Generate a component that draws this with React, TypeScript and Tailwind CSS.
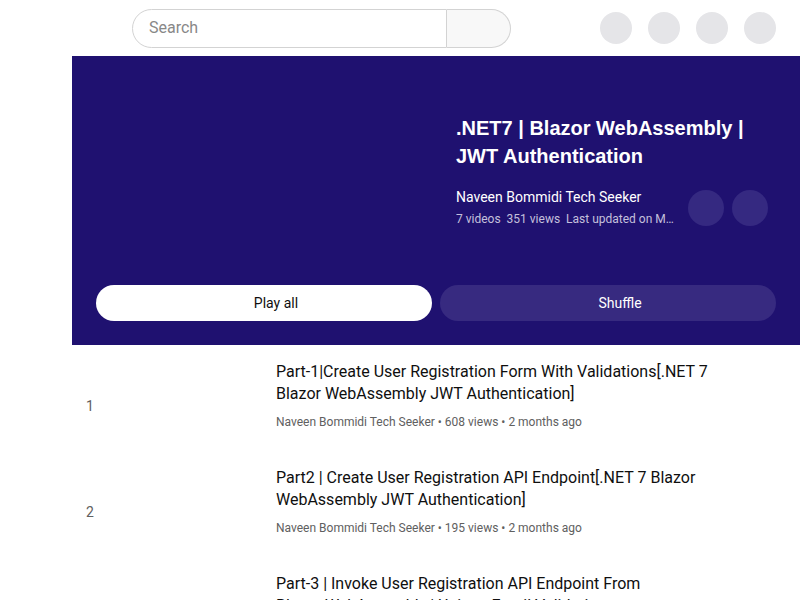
import React from 'react';

type Video = {
  index: number;
  title: string;
  views: string;
  age: string;
};

const videos: Video[] = [
  {
    index: 1,
    title:
      'Part-1|Create User Registration Form With Validations[.NET 7 Blazor WebAssembly JWT Authentication]',
    views: '608 views',
    age: '2 months ago',
  },
  {
    index: 2,
    title:
      'Part2 | Create User Registration API Endpoint[.NET 7 Blazor WebAssembly JWT Authentication]',
    views: '195 views',
    age: '2 months ago',
  },
  {
    index: 3,
    title:
      'Part-3 | Invoke User Registration API Endpoint From Blazor\u00a0WebAssembly | Unique Email Validation',
    views: '120 views',
    age: '2 months ago',
  },
];

const Header: React.FC = () => (
  <div className="h-14 flex items-center bg-white">
    <div className="ml-[132px] flex h-[39px] w-[379px]">
      <div className="flex-1 flex items-center rounded-l-full border border-[#d3d3d3] pl-4 text-[16px] text-[#888]">
        Search
      </div>
      <div className="w-[64px] rounded-r-full border border-l-0 border-[#d3d3d3] bg-[#f8f8f8]"></div>
    </div>
    <div className="ml-auto mr-6 flex gap-4">
      {[0, 1, 2, 3].map((i) => (
        <div key={i} className="w-8 h-8 rounded-full bg-[#e5e5e8]"></div>
      ))}
    </div>
  </div>
);

const Banner: React.FC = () => (
  <div className="ml-[72px] h-[289px] bg-[#1f1170] px-6 pt-[58px]">
    <div className="flex h-[171px]">
      <div className="w-[336px]"></div>
      <div className="ml-6 flex-1 min-w-0">
        <h1 className="font-['Liberation_Sans',_Arial,_sans-serif] text-[20px] font-bold leading-[28px] text-white">
          .NET7 | Blazor WebAssembly | JWT Authentication
        </h1>
        <div className="mt-[17px] flex items-center">
          <div className="w-[220px] min-w-0">
            <div className="text-[14px] leading-5 text-white">
              Naveen Bommidi Tech Seeker
            </div>
            <div className="mt-[3px] truncate text-[12px] leading-[18px] text-[#c4c0dc]">
              7 videos&nbsp;&nbsp;351 views&nbsp;&nbsp;Last updated on Mar 5, 2023
            </div>
          </div>
          <div className="ml-3 flex gap-2">
            <div className="w-9 h-9 rounded-full bg-[#352981]"></div>
            <div className="w-9 h-9 rounded-full bg-[#352981]"></div>
          </div>
        </div>
      </div>
    </div>
    <div className="flex gap-2">
      <button className="flex-1 h-9 flex items-center justify-center rounded-full bg-white text-[14px] text-[#0f0f0f]">
        <span className="w-6"></span>
        Play all
      </button>
      <button className="flex-1 h-9 flex items-center justify-center rounded-full bg-[#372a80] text-[14px] text-white">
        <span className="w-6"></span>
        Shuffle
      </button>
    </div>
  </div>
);

const VideoRow: React.FC<{ video: Video }> = ({ video }) => (
  <div className="flex h-[106px] items-center">
    <div className="w-[36px] text-center text-[14px] text-[#606060]">{video.index}</div>
    <div className="w-[168px] shrink-0"></div>
    <div className="self-start pt-[8px] w-[450px]">
      <div className="text-[16px] leading-[22px] text-[#0f0f0f]">{video.title}</div>
      <div className="mt-[8px] text-[12px] leading-[18px] text-[#606060]">
        Naveen Bommidi Tech Seeker • {video.views} • {video.age}
      </div>
    </div>
  </div>
);

const App: React.FC = () => {
  return (
    <div className="min-h-screen bg-white font-['Roboto',_'Liberation_Sans',_sans-serif]">
      <Header />
      <Banner />
      <div className="ml-[72px] pt-2">
        {videos.map((v) => (
          <VideoRow key={v.index} video={v} />
        ))}
      </div>
    </div>
  );
};

export default App;
